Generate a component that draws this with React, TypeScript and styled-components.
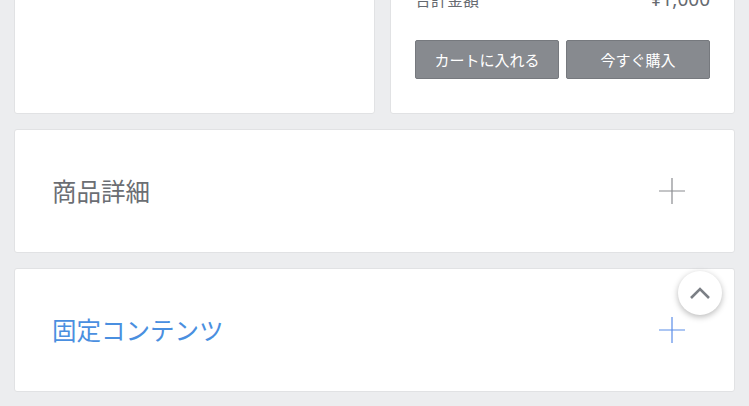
import React from "react";
import styled, { createGlobalStyle } from "styled-components";

const Global = createGlobalStyle`
  html, body { margin: 0; padding: 0; background: #ecedef; overflow: hidden; }
  body { font-family: "Noto Sans CJK JP", "Noto Sans", sans-serif; }
`;

const Page = styled.div`
  margin-top: -40px;
  padding: 0 14px 15px 14px;
  display: flex;
  flex-direction: column;
  gap: 15px;
`;

const TopRow = styled.div`
  display: grid;
  grid-template-columns: 361px 345px;
  gap: 15px;
`;

const Card = styled.div`
  background: #fff;
  border: 1px solid #e1e2e4;
  border-radius: 3px;
  box-sizing: border-box;
`;

const ImageCard = styled(Card)`
  height: 154px;
`;

const BuyCard = styled(Card)`
  height: 154px;
  padding: 24px 24px 0 24px;
`;

const TotalRow = styled.div`
  display: flex;
  justify-content: space-between;
  align-items: baseline;
  height: 28px;
  margin-bottom: 27px;
  color: #666a70;
`;

const TotalLabel = styled.span`
  font-size: 16px;
  line-height: 28px;
`;

const TotalPrice = styled.span`
  font-family: "Noto Sans", sans-serif;
  font-size: 19px;
  line-height: 28px;
`;

const Buttons = styled.div`
  display: grid;
  grid-template-columns: 1fr 1fr;
  gap: 7px;
`;

const Button = styled.button`
  height: 39px;
  background: #878a8f;
  border: 1px solid #76797e;
  border-radius: 2px;
  color: #fff;
  font-family: "Noto Sans CJK JP", sans-serif;
  font-size: 15px;
  padding: 0;
  cursor: pointer;
`;

const Accordion = styled(Card)<{ $active?: boolean }>`
  height: 124px;
  display: flex;
  align-items: center;
  justify-content: space-between;
  padding: 0 49px 0 37px;
  color: ${(p) => (p.$active ? "#4a8fe0" : "#6b6e73")};
`;

const Title = styled.h2`
  margin: 0;
  font-weight: 400;
  font-size: 24.5px;
  line-height: 1;
`;

const Plus = styled.svg<{ $active?: boolean }>`
  width: 26px;
  height: 26px;
  color: ${(p) => (p.$active ? "#5b8de8" : "#8a8c90")};
`;

const ScrollTop = styled.button`
  position: fixed;
  right: 27px;
  bottom: 91px;
  width: 44px;
  height: 44px;
  border-radius: 50%;
  border: none;
  background: #fff;
  box-shadow: 0 2px 6px rgba(0, 0, 0, 0.28);
  display: flex;
  align-items: center;
  justify-content: center;
  padding: 0;
  cursor: pointer;
`;

const PlusIcon = ({ active }: { active?: boolean }) => (
  <Plus $active={active} viewBox="0 0 26 26">
    <path d="M0 13H26M13 0V26" stroke="currentColor" strokeWidth="1.2" fill="none" />
  </Plus>
);

export default function App() {
  return (
    <>
      <Global />
      <Page>
        <TopRow>
          <ImageCard />
          <BuyCard>
            <TotalRow>
              <TotalLabel>合計金額</TotalLabel>
              <TotalPrice>¥1,000</TotalPrice>
            </TotalRow>
            <Buttons>
              <Button>カートに入れる</Button>
              <Button>今すぐ購入</Button>
            </Buttons>
          </BuyCard>
        </TopRow>
        <Accordion>
          <Title>商品詳細</Title>
          <PlusIcon />
        </Accordion>
        <Accordion $active>
          <Title>固定コンテンツ</Title>
          <PlusIcon active />
        </Accordion>
      </Page>
      <ScrollTop aria-label="ページトップへ">
        <svg width="22" height="14" viewBox="0 0 22 14">
          <path d="M2 12L11 3L20 12" stroke="#7b7f85" strokeWidth="2.6" fill="none" />
        </svg>
      </ScrollTop>
    </>
  );
}
